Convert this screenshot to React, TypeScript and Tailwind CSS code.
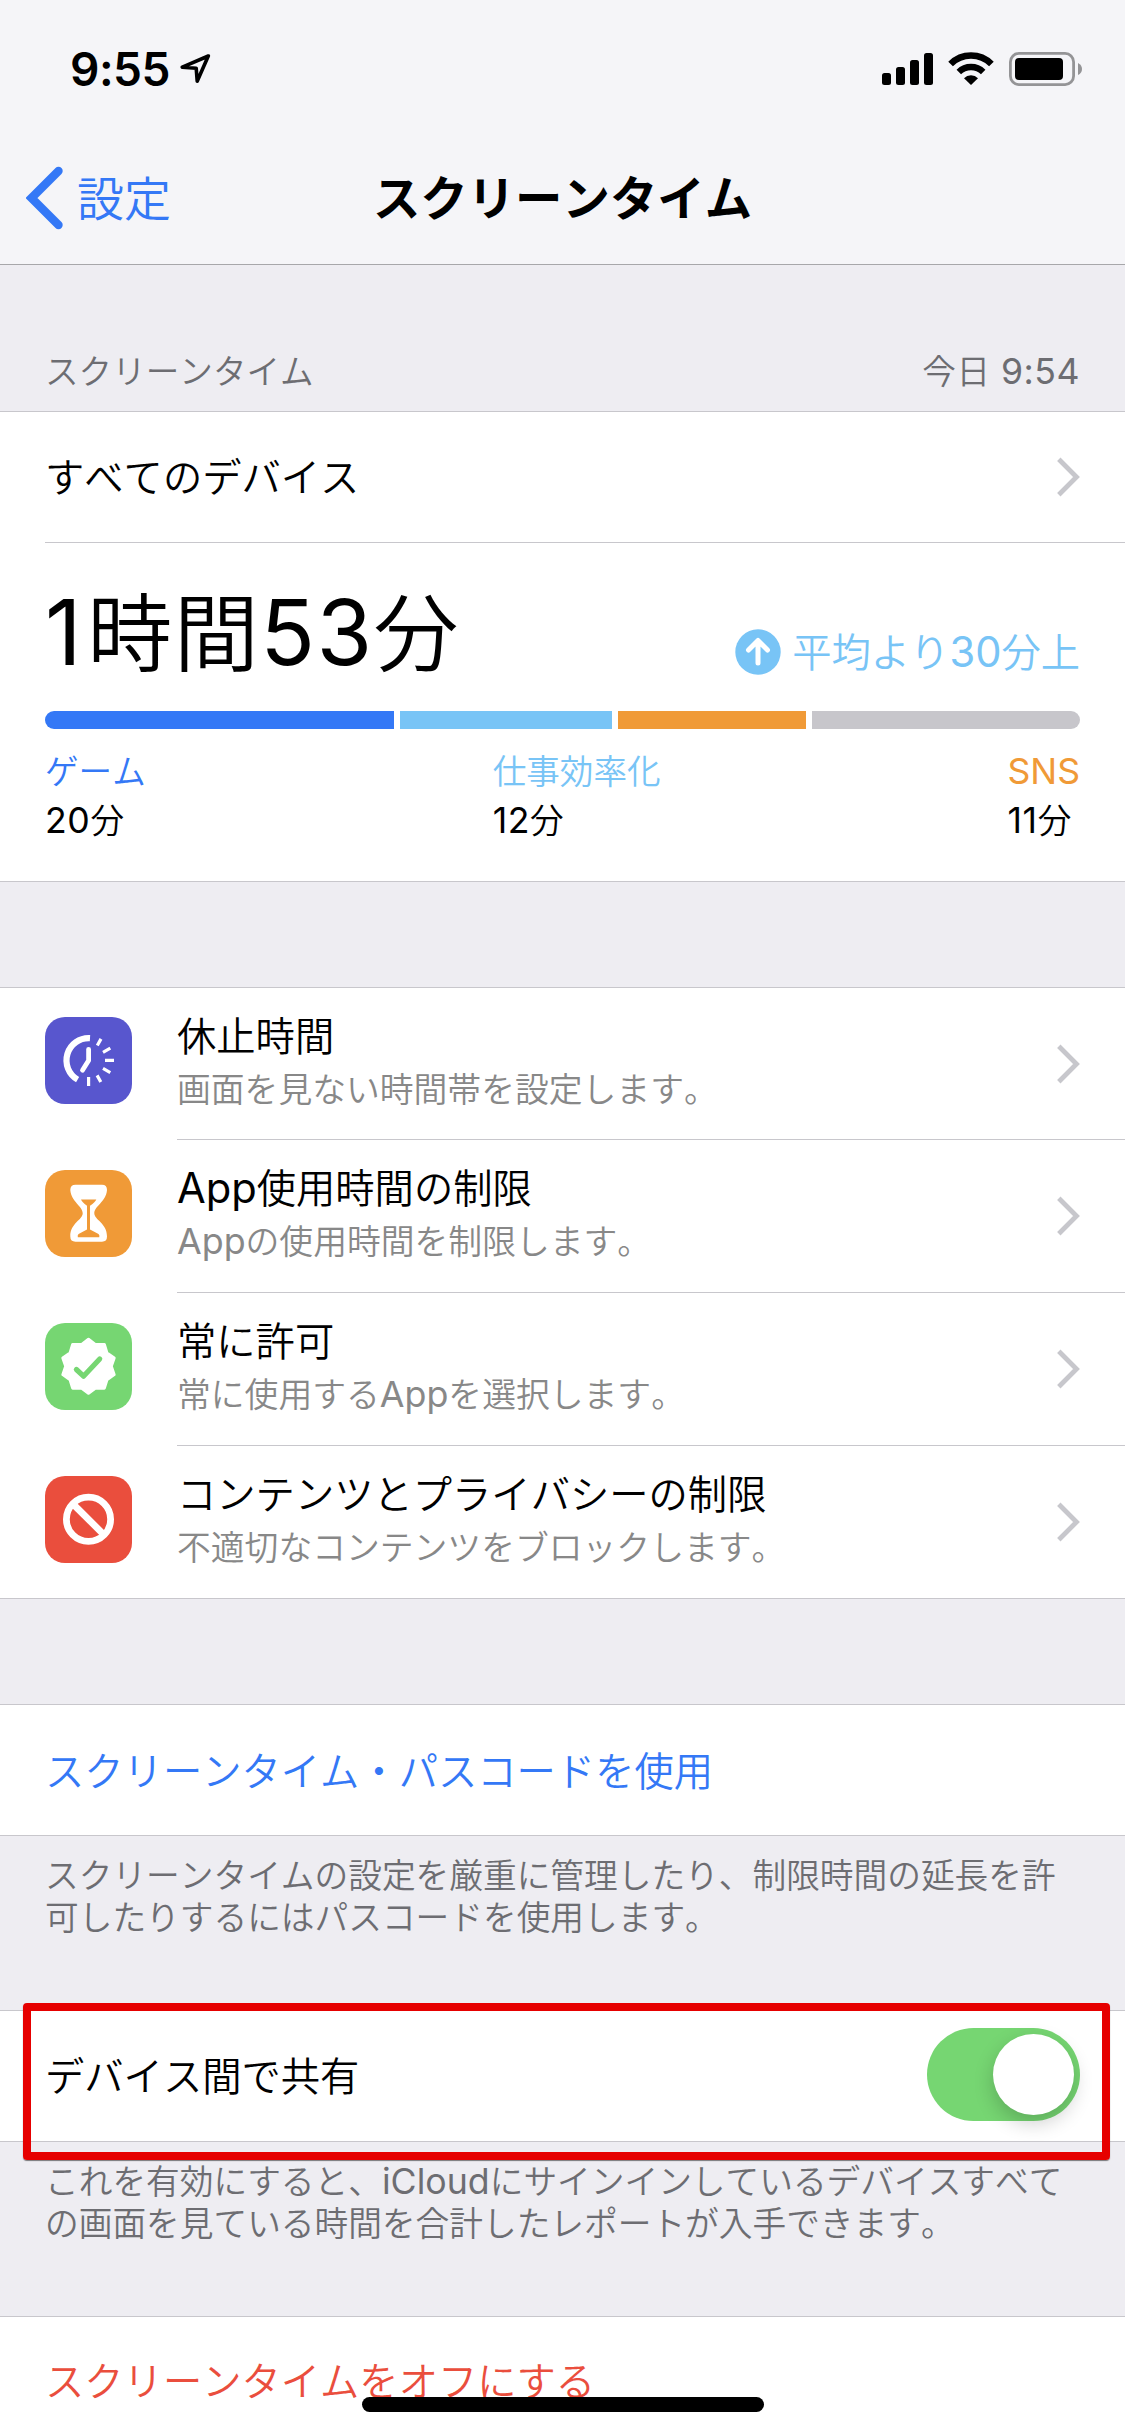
import type { ReactNode } from "react";
import { clsx } from "clsx";

const usage = [
  { label: "ゲーム", minutes: 20, bar: "w-[349px] rounded-l-full bg-[#3478f6]", text: "text-[#3478f6]" },
  { label: "仕事効率化", minutes: 12, bar: "w-[212px] bg-[#78c4f6]", text: "text-[#78c4f6]" },
  { label: "SNS", minutes: 11, bar: "w-[188px] bg-[#f09a37]", text: "text-[#f09a37]", latin: true },
];

const badgePoints = Array.from({ length: 20 }, (_, i) => {
  const r = i % 2 === 0 ? 27 : 22.8;
  const a = (i * Math.PI) / 10;
  return `${(43.5 + r * Math.sin(a)).toFixed(2)},${(43.3 - r * Math.cos(a)).toFixed(2)}`;
}).join(" ");

// Latin glyphs and digits run slightly larger than the kana around them
const Latin = ({ children }: { children: ReactNode }) => (
  <span className="font-['Inter'] text-[1.06em] font-normal leading-none">{children}</span>
);

const Chevron = () => (
  <svg className="h-[40px] w-[25px] shrink-0" viewBox="0 0 25 40" fill="none">
    <path d="M2.8 2.3 L20.5 20 L2.8 37.7" stroke="#c7c7cc" strokeWidth="4.8" />
  </svg>
);

const DowntimeIcon = () => (
  <g stroke="#fff" fill="none">
    <path d="M45 21.2 A22.2 22.2 0 0 0 32.6 62.6" strokeWidth="6.2" />
    <path d="M43.6 32.3 V43.5 L37.5 53.3" strokeWidth="4.8" strokeLinecap="round" strokeLinejoin="round" />
    <path
      d="M56 21.9 L52.3 28.5 M65.3 31.2 L58 35.4 M60 43.4 H69 M65.3 55.6 L58 51.4 M55.8 65 L52.1 58.4 M43.6 60 V69"
      strokeWidth="3.2"
    />
  </g>
);

const HourglassIcon = () => (
  <>
    <path
      d="M30.5 14.7 H57 Q62 14.7 62 20 C61 32 49.3 36 49.3 43.3 C49.3 50 62 53 62 66.5 Q62 71.7 57 71.7 H30.5 Q25.3 71.7 25.3 66.5 C25.3 53 37.7 50 37.7 43.3 C37.7 36 26.3 32 25.3 20 Q25.3 14.7 30.5 14.7 Z"
      fill="#fff"
    />
    <path
      d="M36 29.5 H51.3 Q50.5 32 45 35.7 V59.5 L53.5 64 Q54.8 65 54.3 67.2 H32.8 Q32.3 65 33.6 64 L42 59.5 V35.7 Q36.8 32 36 29.5 Z"
      fill="#f09a37"
    />
  </>
);

const AllowedIcon = () => (
  <>
    <polygon points={badgePoints} fill="#fff" stroke="#fff" strokeWidth="3" strokeLinejoin="round" />
    <path
      d="M31.4 46.5 L38.5 53.2 L54.7 36"
      fill="none"
      stroke="#76d672"
      strokeWidth="5.2"
      strokeLinecap="round"
      strokeLinejoin="round"
    />
  </>
);

const RestrictIcon = () => (
  <g stroke="#fff" strokeWidth="6.8" fill="none">
    <circle cx="43.5" cy="43.3" r="22.1" />
    <path d="M28 28 L59 58.8" />
  </g>
);

const options = [
  {
    icon: DowntimeIcon,
    bg: "mt-[29px] bg-[#5856ce]",
    row: "h-[152px] border-b",
    title: "休止時間",
    detail: "画面を見ない時間帯を設定します。",
  },
  {
    icon: HourglassIcon,
    bg: "mt-[30px] bg-[#f09a37]",
    row: "h-[153px] border-b",
    title: <><Latin>App</Latin>使用時間の制限</>,
    detail: <><Latin>App</Latin>の使用時間を制限します。</>,
  },
  {
    icon: AllowedIcon,
    bg: "mt-[30px] bg-[#76d672]",
    row: "h-[153px] border-b",
    title: "常に許可",
    detail: <>常に使用する<Latin>App</Latin>を選択します。</>,
  },
  {
    icon: RestrictIcon,
    bg: "mt-[30px] bg-[#ea4e3d]",
    row: "h-[152px]",
    title: "コンテンツとプライバシーの制限",
    detail: "不適切なコンテンツをブロックします。",
  },
];

const StatusBar = () => (
  <div className="flex h-[132px] items-start justify-between pl-[70px] pr-[42px] pt-[46px]">
    <div className="flex items-start">
      <span className="w-[110px] font-['Inter'] text-[46px] font-semibold leading-[46px] tracking-[-0.5px]">9:55</span>
      <svg className="mt-[7px] h-[32px] w-[32px]" viewBox="0 0 32 32" fill="none">
        <path d="M28.3 3 L2.3 14.2 L16.2 15.2 L17.2 28.2 Z" stroke="#000" strokeWidth="3.6" strokeLinejoin="round" />
      </svg>
    </div>
    <div className="flex gap-[15px] pt-[6px]">
      <svg className="h-[34px] w-[51px]" viewBox="0 0 51 34">
        <rect x="0" y="21" width="9" height="12" rx="2.5" />
        <rect x="14" y="15" width="9" height="18" rx="2.5" />
        <rect x="28" y="8" width="9" height="25" rx="2.5" />
        <rect x="42" y="1" width="9" height="32" rx="2.5" />
      </svg>
      <svg className="h-[34px] w-[46px]" viewBox="0 0 46 34">
        <path d="M2.6 12 A28.8 28.8 0 0 1 43.4 12" fill="none" stroke="#000" strokeWidth="6.6" />
        <path d="M10.8 20 A17.4 17.4 0 0 1 35.2 20" fill="none" stroke="#000" strokeWidth="6.4" />
        <path d="M23 33 L16 26.2 A10 10 0 0 1 30 26.2 Z" />
      </svg>
      <svg className="h-[34px] w-[74px]" viewBox="0 0 74 34">
        <rect x="1.4" y="1.4" width="63.2" height="31.2" rx="8.5" fill="none" stroke="#949496" strokeWidth="2.8" />
        <rect x="6" y="6" width="48" height="22" rx="4" />
        <path d="M69 11 Q73 13 73 17 Q73 21 69 23 Z" fill="#949496" />
      </svg>
    </div>
  </div>
);

const App = () => {
  return (
    <div
      lang="ja"
      className="relative h-[2436px] w-[1125px] overflow-hidden bg-[#eeedf2] font-['Noto_Sans_CJK_JP',sans-serif] text-[39.3px] font-[350] text-black [font-kerning:none]"
    >
      <header className="h-[265px] border-b border-[#a7a7aa] bg-[#f5f5f8]">
        <StatusBar />
        <div className="grid h-[132px] grid-cols-[1fr_auto_1fr] items-center px-[26px] text-[47px] leading-[60px]">
          <div className="flex items-center text-[#3478f6]">
            <svg className="h-[64px] w-[38px]" viewBox="0 0 38 64" fill="none">
              <path
                d="M32.5 5 L5.5 32 L32.5 59"
                stroke="currentColor"
                strokeWidth="8.4"
                strokeLinecap="round"
                strokeLinejoin="miter"
              />
            </svg>
            <span className="ml-[13px] pb-[5px]">設定</span>
          </div>
          <h1 className="pb-[5px] text-[47.4px] font-bold">スクリーンタイム</h1>
        </div>
      </header>

      <div className="flex h-[146px] items-end justify-between px-[45px] pb-[19px] text-[33.6px] leading-[44px] text-[#6d6d72]">
        <span>スクリーンタイム</span>
        <span className="tracking-[0.5px]">
          今日<Latin> 9:54</Latin>
        </span>
      </div>

      {/* Usage summary */}
      <section className="h-[471px] border-y border-[#c8c7cc] bg-white">
        <div className="ml-[45px] flex h-[131px] items-center justify-between border-b border-[#c8c7cc] pb-px pr-[44px]">
          <span className="pb-[3px]">すべてのデバイス</span>
          <Chevron />
        </div>
        <div className="px-[45px]">
          <div className="flex h-[168px] items-end justify-between">
            <div className="pb-[33px] text-[85px] leading-[100px] tracking-[1.5px]">
              <Latin>1</Latin>
              <span className="ml-[4px]">時間</span>
              <Latin>53</Latin>分
            </div>
            <div className="flex items-center gap-[11px] pb-[31px] leading-[60px] text-[#78c4f6]">
              <svg className="h-[46px] w-[46px]" viewBox="0 0 46 46">
                <circle cx="23" cy="23" r="22.7" fill="currentColor" />
                <path
                  d="M23 34 V12 M13.5 21 L23 11.5 L32.5 21"
                  fill="none"
                  stroke="#fff"
                  strokeWidth="5"
                  strokeLinecap="round"
                  strokeLinejoin="round"
                />
              </svg>
              <span className="-mt-[4px]">
                平均より<Latin>30</Latin>分上
              </span>
            </div>
          </div>
          <div className="flex h-[18px] gap-[6px]">
            {usage.map((u) => (
              <div key={u.label} className={u.bar} />
            ))}
            <div className="flex-1 rounded-r-full bg-[#c7c6cb]" />
          </div>
          <div className="mt-[16px] flex justify-between text-[33.6px] leading-[49px]">
            {usage.map((u) => (
              <div key={u.label}>
                <div className={u.text}>{u.latin ? <Latin>{u.label}</Latin> : u.label}</div>
                <div className="tracking-[0.6px]">
                  <Latin>{u.minutes}</Latin>分
                </div>
              </div>
            ))}
          </div>
        </div>
      </section>

      {/* Limits */}
      <section className="mt-[105px] border-y border-[#c8c7cc] bg-white">
        {options.map((o, i) => (
          <div key={i} className="flex pl-[45px]">
            <svg className={clsx("h-[87px] w-[87px] rounded-[20px]", o.bg)} viewBox="0 0 87 87">
              <o.icon />
            </svg>
            <div className={clsx("ml-[45px] flex flex-1 items-center justify-between border-[#c8c7cc] pr-[44px]", o.row)}>
              <div className="pb-[6px]">
                <div className="text-[39.3px] leading-[53px]">{o.title}</div>
                <div className="text-[33.8px] leading-[55px] text-[#888]">{o.detail}</div>
              </div>
              <Chevron />
            </div>
          </div>
        ))}
      </section>

      {/* Passcode */}
      <section className="mt-[105px] flex h-[132px] items-center border-y border-[#c8c7cc] bg-white px-[45px] pb-[2px] text-[#3478f6]">
        スクリーンタイム・パスコードを使用
      </section>
      <p className="h-[174px] whitespace-nowrap px-[45px] pt-[17px] text-[33.7px] leading-[42px] text-[#6d6d72]">
        スクリーンタイムの設定を厳重に管理したり、制限時間の延長を許
        <br />
        可したりするにはパスコードを使用します。
      </p>

      {/* Share across devices */}
      <section className="relative flex h-[132px] items-center justify-between border-y border-[#c8c7cc] bg-white px-[45px] pb-[3px]">
        <span>デバイス間で共有</span>
        <button className="flex h-[93px] w-[153px] justify-end rounded-full bg-[#76d672] p-[6px]">
          <span className="size-[81px] rounded-full bg-white shadow-[0_8px_20px_rgba(0,0,0,0.2)]" />
        </button>
        <div className="absolute left-[23px] top-[-8px] h-[157px] w-[1087px] rounded-[4px] border-8 border-[#e60000] shadow-[0_1px_1px_rgba(0,0,0,0.5)]" />
      </section>
      <p className="h-[174px] whitespace-nowrap px-[45px] pt-[17px] text-[33.7px] leading-[42px] text-[#6d6d72]">
        これを有効にすると、<Latin>iCloud</Latin>にサインインしているデバイスすべて
        <br />
        の画面を見ている時間を合計したレポートが入手できます。
      </p>

      <section className="flex h-[132px] items-center border-t border-[#c8c7cc] bg-white px-[45px] pb-[7px] text-[#ea4e3d]">
        スクリーンタイムをオフにする
      </section>
      <div className="absolute left-[362px] top-[2397px] h-[15px] w-[402px] rounded-full bg-black" />
    </div>
  );
};

export default App;
